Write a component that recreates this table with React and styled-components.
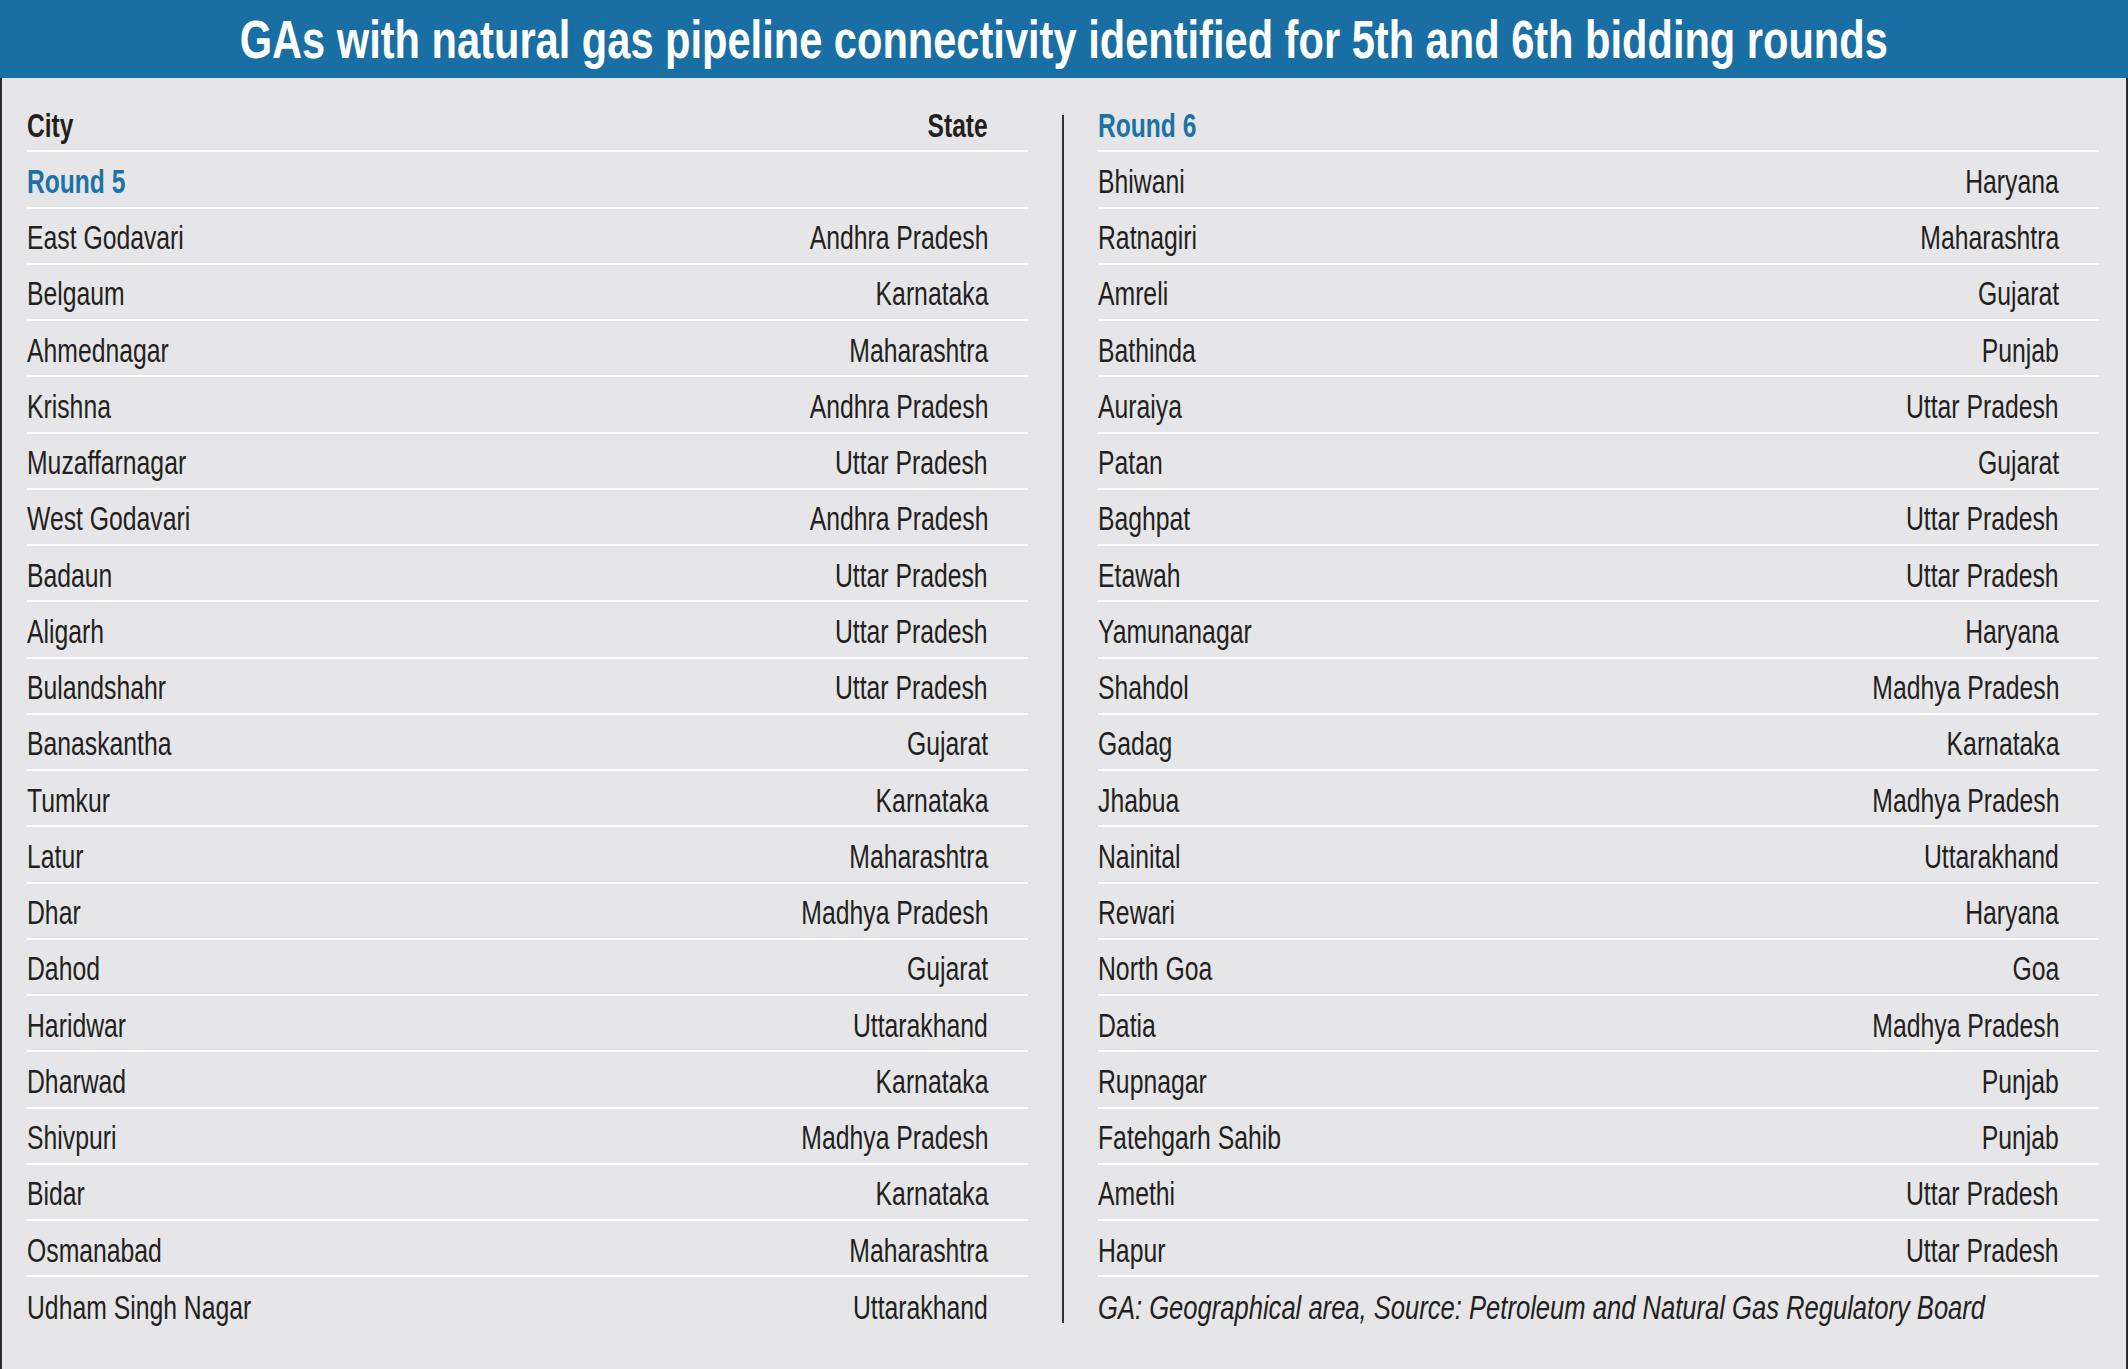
import React from 'react'
import styled, { createGlobalStyle } from 'styled-components'

const round5 = [
  ['East Godavari', 'Andhra Pradesh'],
  ['Belgaum', 'Karnataka'],
  ['Ahmednagar', 'Maharashtra'],
  ['Krishna', 'Andhra Pradesh'],
  ['Muzaffarnagar', 'Uttar Pradesh'],
  ['West Godavari', 'Andhra Pradesh'],
  ['Badaun', 'Uttar Pradesh'],
  ['Aligarh', 'Uttar Pradesh'],
  ['Bulandshahr', 'Uttar Pradesh'],
  ['Banaskantha', 'Gujarat'],
  ['Tumkur', 'Karnataka'],
  ['Latur', 'Maharashtra'],
  ['Dhar', 'Madhya Pradesh'],
  ['Dahod', 'Gujarat'],
  ['Haridwar', 'Uttarakhand'],
  ['Dharwad', 'Karnataka'],
  ['Shivpuri', 'Madhya Pradesh'],
  ['Bidar', 'Karnataka'],
  ['Osmanabad', 'Maharashtra'],
  ['Udham Singh Nagar', 'Uttarakhand']
]

const round6 = [
  ['Bhiwani', 'Haryana'],
  ['Ratnagiri', 'Maharashtra'],
  ['Amreli', 'Gujarat'],
  ['Bathinda', 'Punjab'],
  ['Auraiya', 'Uttar Pradesh'],
  ['Patan', 'Gujarat'],
  ['Baghpat', 'Uttar Pradesh'],
  ['Etawah', 'Uttar Pradesh'],
  ['Yamunanagar', 'Haryana'],
  ['Shahdol', 'Madhya Pradesh'],
  ['Gadag', 'Karnataka'],
  ['Jhabua', 'Madhya Pradesh'],
  ['Nainital', 'Uttarakhand'],
  ['Rewari', 'Haryana'],
  ['North Goa', 'Goa'],
  ['Datia', 'Madhya Pradesh'],
  ['Rupnagar', 'Punjab'],
  ['Fatehgarh Sahib', 'Punjab'],
  ['Amethi', 'Uttar Pradesh'],
  ['Hapur', 'Uttar Pradesh']
]

const GlobalStyle = createGlobalStyle`
  html, body {
    margin: 0;
    padding: 0;
    background: #e6e6e8;
  }
  body {
    font-family: "Liberation Sans", Arial, sans-serif;
    color: #231f20;
  }
`

export default function App() {
  return (
    <>
      <GlobalStyle />
      <Page>
        <TitleBar>
          <Title>GAs with natural gas pipeline connectivity identified for 5th and 6th bidding rounds</Title>
        </TitleBar>
        <Body>
          <Column>
            <Row>
              <Head>City</Head>
              <Head end>State</Head>
            </Row>
            <Row>
              <RoundLabel>Round 5</RoundLabel>
            </Row>
            {round5.map(([city, state], i) => (
              <Row key={city} last={i === round5.length - 1}>
                <Cell>{city}</Cell>
                <Cell end>{state}</Cell>
              </Row>
            ))}
          </Column>
          <Divider />
          <Column>
            <Row>
              <RoundLabel>Round 6</RoundLabel>
            </Row>
            {round6.map(([city, state]) => (
              <Row key={city}>
                <Cell>{city}</Cell>
                <Cell end>{state}</Cell>
              </Row>
            ))}
            <Row last>
              <Note>GA: Geographical area, Source: Petroleum and Natural Gas Regulatory Board</Note>
            </Row>
          </Column>
        </Body>
      </Page>
    </>
  )
}

const Page = styled.div`
  width: 2128px;
  min-height: 1369px;
  display: flex;
  flex-direction: column;
  background: #e6e6e8;
  box-sizing: border-box;
`

const TitleBar = styled.div`
  height: 78px;
  background: #196fa3;
  display: flex;
  align-items: center;
  justify-content: center;
  overflow: hidden;
`

/* condensed face: Liberation Sans squeezed to the width of the original */
const Title = styled.h1`
  margin: 0;
  color: #ffffff;
  font-size: 53px;
  font-weight: 700;
  line-height: 1;
  white-space: nowrap;
  transform: scaleX(0.785);
  transform-origin: center;
`

const Body = styled.div`
  flex: 1;
  display: grid;
  grid-template-columns: 1001px 2px 1001px;
  column-gap: 34px;
  align-items: start;
  padding: 18px 26px 0 25px;
  border-left: 2px solid #2b2b2b;
  border-right: 2px solid #2b2b2b;
`

const Column = styled.div`
  display: flex;
  flex-direction: column;
`

const Divider = styled.div`
  margin-top: 19px;
  height: 1208px;
  background: #333333;
`

const Row = styled.div`
  height: 56.25px;
  box-sizing: border-box;
  display: flex;
  align-items: center;
  justify-content: space-between;
  padding: 5px 40px 0 0;
  border-bottom: ${props => (props.last ? 'none' : '2px solid #ffffff')};
`

const Cell = styled.span`
  display: inline-block;
  font-size: 33px;
  white-space: nowrap;
  color: #231f20;
  transform: scaleX(0.75);
  transform-origin: ${props => (props.end ? 'right' : 'left')} center;
`

const Head = styled(Cell)`
  font-weight: 700;
  transform: scaleX(0.745);
`

const RoundLabel = styled(Cell)`
  font-weight: 700;
  color: #1d71a6;
  transform: scaleX(0.745);
`

const Note = styled(Cell)`
  font-style: italic;
  transform: scaleX(0.775);
`
